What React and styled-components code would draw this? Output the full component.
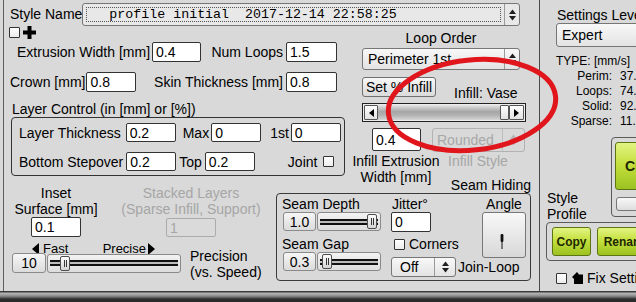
import React from 'react';
import styled, { createGlobalStyle } from 'styled-components';

const GlobalStyle = createGlobalStyle`
  html, body { margin: 0; padding: 0; }
  body {
    background: #d9d9d9;
    font-family: 'Liberation Sans', Arial, sans-serif;
    font-size: 14px;
    color: #000;
  }
`;

const Screen = styled.div`
  position: relative;
  width: 636px;
  height: 302px;
  overflow: hidden;
  background: #d9d9d9;
`;

const Main = styled.div`
  display: flex;
  height: 291px;
`;

const LeftPanel = styled.div`
  margin-left: 3px;
  width: 537px;
  flex-shrink: 0;
  box-sizing: border-box;
  border-left: 1px solid #5e5e5e;
  border-right: 1px solid #4a4a4a;
`;

const PanelGrid = styled.div`
  display: grid;
  grid-template-columns: 272px 74px 1fr;
  grid-template-rows: 26px 150px 17px 88px;
  grid-template-areas:
    'name name name'
    'upper upper right'
    'lower . right'
    'lower seam seam';
`;

/* generic controls */

const Label = styled.span`
  margin-left: ${(p) => p.$ml || 0}px;
  margin-top: ${(p) => p.$mt || 0}px;
  white-space: nowrap;
  line-height: 16px;
  color: ${(p) => (p.$muted ? '#a6a6a6' : 'inherit')};
`;

const Field = styled.div`
  width: ${(p) => p.$w}px;
  height: ${(p) => p.$h || 20}px;
  margin-left: ${(p) => p.$ml || 0}px;
  margin-top: ${(p) => p.$mt || 0}px;
  flex-shrink: 0;
  box-sizing: border-box;
  border: 1px solid ${(p) => (p.$disabled ? '#ababab' : '#333')};
  border-radius: 2px;
  background: ${(p) => (p.$disabled ? '#dadada' : '#fff')};
  color: ${(p) => (p.$disabled ? '#a6a6a6' : '#000')};
  padding-left: 3px;
  display: flex;
  align-items: center;
  text-align: left;
`;

const Checkbox = styled.div`
  width: 11px;
  height: 11px;
  margin-left: ${(p) => p.$ml || 0}px;
  margin-top: ${(p) => p.$mt || 0}px;
  flex-shrink: 0;
  box-sizing: border-box;
  border: 1px solid #333;
  border-radius: 1px;
  background: linear-gradient(#ffffff, #ececec);
`;

const Combo = styled.div`
  display: flex;
  width: ${(p) => p.$w}px;
  height: ${(p) => p.$h || 22}px;
  margin-left: ${(p) => p.$ml || 0}px;
  margin-top: ${(p) => p.$mt || 0}px;
  flex-shrink: 0;
  box-sizing: border-box;
  border: 1px solid ${(p) => (p.$disabled ? '#b2b2b2' : '#767676')};
  border-radius: 3px;
  background: ${(p) =>
    p.$disabled ? '#d9d9d9' : p.$flat ? '#e8e8e8' : 'linear-gradient(#f8f8f8, #e3e3e3)'};
  color: ${(p) => (p.$disabled ? '#a8a8a8' : '#000')};
`;

const ComboText = styled.div`
  flex: 1;
  min-width: 0;
  display: flex;
  align-items: center;
  padding-left: ${(p) => (p.$pl === undefined ? 5 : p.$pl)}px;
  white-space: nowrap;
  overflow: hidden;
`;

const FocusText = styled.div`
  flex: 1;
  margin: 3px;
  border: 1px dotted #555;
  display: flex;
  align-items: center;
  padding-left: 22px;
  font-family: 'Liberation Mono', 'Courier New', monospace;
  font-size: 13.3px;
  white-space: pre;
`;

const ComboButton = styled.div`
  width: ${(p) => p.$w || 15}px;
  flex-shrink: 0;
  box-sizing: border-box;
  border-left: 1px solid ${(p) => (p.$disabled ? '#bdbdbd' : '#9a9a9a')};
  display: flex;
  align-items: center;
  justify-content: center;
`;

const PushButton = styled.div`
  width: ${(p) => p.$w}px;
  height: ${(p) => p.$h}px;
  flex-shrink: 0;
  box-sizing: border-box;
  border: 1px solid #6f6f6f;
  border-radius: 3px;
  background: linear-gradient(#f8f8f8, #dadada);
  display: flex;
  align-items: center;
  justify-content: center;
  white-space: nowrap;
`;

const GreenButton = styled.div`
  width: ${(p) => p.$w}px;
  height: ${(p) => p.$h}px;
  flex-shrink: 0;
  box-sizing: border-box;
  border: 1px solid #5c7412;
  border-radius: 3px;
  background: linear-gradient(#e3f483 0%, #c4e03e 45%, #9cc221 100%);
  color: #1d2600;
  font-weight: bold;
  font-size: ${(p) => p.$fs || 12}px;
  display: flex;
  align-items: center;
  justify-content: ${(p) => (p.$pl ? 'flex-start' : 'center')};
  padding-left: ${(p) => p.$pl || 0}px;
  white-space: nowrap;
`;

const ValueBox = styled.div`
  width: ${(p) => p.$w}px;
  height: ${(p) => p.$h || 19}px;
  flex-shrink: 0;
  box-sizing: border-box;
  border: 1px solid #8a8a8a;
  border-radius: 3px;
  background: linear-gradient(#f6f6f6, #dbdbdb);
  display: flex;
  align-items: center;
  justify-content: center;
`;

const SliderBox = styled.div`
  width: ${(p) => p.$w}px;
  height: ${(p) => p.$h || 19}px;
  margin-left: ${(p) => p.$ml || 0}px;
  flex-shrink: 0;
  box-sizing: border-box;
  border: 1px solid #8a8a8a;
  border-radius: 3px;
  background: linear-gradient(#f3f3f3, #dddddd);
  padding: 0 2px;
  display: flex;
  align-items: center;
`;

const TrackPart = styled.div`
  width: ${(p) => (p.$w === undefined ? 'auto' : `${p.$w}px`)};
  flex: ${(p) => (p.$w === undefined ? 1 : 'none')};
  height: 6px;
  box-sizing: border-box;
  border-top: 2px solid #111;
  border-bottom: 2px solid #111;
  background: #bdbdbd;
`;

const Thumb = styled.div`
  width: 10px;
  height: 15px;
  flex-shrink: 0;
  box-sizing: border-box;
  border: 1px solid #4e4e4e;
  border-radius: 2px;
  background: linear-gradient(#fdfdfd, #d4d4d4);
  display: flex;
  align-items: center;
  justify-content: center;

  &::after {
    content: '';
    width: 1px;
    height: 7px;
    border-left: 1px solid #333;
    border-right: 1px solid #333;
  }
`;

const Slider = ({ w, pos, ml }) => (
  <SliderBox $w={w} $ml={ml}>
    <TrackPart $w={pos} />
    <Thumb />
    <TrackPart />
  </SliderBox>
);

const UpDown = ({ color = '#1e1e1e' }) => (
  <svg width="7" height="12" viewBox="0 0 7 12">
    <path d="M3.5 0.5 L7 5 L0 5 Z" fill={color} />
    <path d="M0 7 L7 7 L3.5 11.5 Z" fill={color} />
  </svg>
);

const Tri = ({ dir, w = 6, h = 10 }) => (
  <svg width={w} height={h} viewBox={`0 0 ${w} ${h}`}>
    <path
      d={dir === 'left' ? `M${w} 0 L${w} ${h} L0 ${h / 2} Z` : `M0 0 L${w} ${h / 2} L0 ${h} Z`}
      fill="#000"
    />
  </svg>
);

/* name row */

const NameRow = styled.div`
  grid-area: name;
  display: flex;
  align-items: flex-start;
  padding: 3px 0 0 6px;
`;

const NameLabel = styled.span`
  line-height: 23px;
  white-space: nowrap;
`;

/* upper left block */

const Upper = styled.div`
  grid-area: upper;
  display: flex;
  flex-direction: column;
`;

const CheckRow = styled.div`
  display: flex;
  align-items: flex-start;
  height: 14px;
  padding-left: 5px;
`;

const PlusIcon = styled.svg`
  margin-left: 3px;
  margin-top: 0;
`;

const FormRow = styled.div`
  display: flex;
  align-items: center;
  justify-content: space-between;
  width: 333px;
  height: 20px;
  box-sizing: border-box;
  margin-top: ${(p) => p.$mt}px;
  padding-left: ${(p) => p.$pl}px;
`;

const Pair = styled.div`
  display: flex;
  align-items: center;
`;

const GroupCaption = styled.div`
  margin-top: 9px;
  padding-left: 8px;
  line-height: 16px;
  white-space: nowrap;
`;

const LayerBox = styled.div`
  margin-left: 7px;
  width: 334px;
  height: 59px;
  box-sizing: border-box;
  border: 1px solid #333;
  border-radius: 4px;
  padding: 5px 0 0 7px;
`;

const BoxRow = styled.div`
  display: flex;
  align-items: center;
  height: 19px;
  margin-top: ${(p) => p.$mt || 0}px;
`;

/* right column of the left panel */

const RightCol = styled.div`
  grid-area: right;
  display: flex;
  flex-direction: column;
`;

const CenterCaption = styled.div`
  width: 158px;
  margin: 4px 0 0 12px;
  text-align: center;
  line-height: 16px;
`;

const ButtonRow = styled.div`
  display: flex;
  align-items: flex-start;
  height: 20px;
  margin-top: 7px;
  padding-left: 12px;
`;

const Scrollbar = styled.div`
  display: flex;
  width: 164px;
  height: 19px;
  margin: 6px 0 0 12px;
  box-sizing: border-box;
  border: 1px solid #222;
  padding: 1px;
  background: #ececec;
`;

const ScrollButton = styled.div`
  width: ${(p) => p.$w}px;
  flex-shrink: 0;
  box-sizing: border-box;
  border: 1px solid #555;
  border-radius: 1px;
  background: linear-gradient(#ffffff, #e2e2e2);
  display: flex;
  align-items: center;
  justify-content: center;
`;

const ScrollTrack = styled.div`
  flex: 1;
  background: linear-gradient(#e4e4e4 0%, #a6a6a6 45%, #b4b4b4 70%, #d6d6d6 100%);
`;

const InfillRow = styled.div`
  display: flex;
  align-items: flex-start;
  height: 24px;
  margin-top: 6px;
  padding-left: 22px;
`;

const CaptionRow = styled.div`
  display: flex;
  margin-top: 1px;
`;

const CaptionBlock = styled.div`
  width: 92px;
  text-align: center;
  line-height: 16px;
  white-space: nowrap;
`;

const CaptionSide = styled.div`
  flex: 1;
  display: flex;
  flex-direction: column;
  padding-right: 8px;
  line-height: 16px;
`;

const SeamTitle = styled.span`
  align-self: flex-end;
  margin-top: 8px;
  white-space: nowrap;
`;

/* lower left block */

const Lower = styled.div`
  grid-area: lower;
  display: flex;
  flex-direction: column;
  padding-top: 9px;
`;

const LowerTop = styled.div`
  display: flex;
`;

const StackCol = styled.div`
  width: ${(p) => p.$w}px;
  display: flex;
  flex-direction: column;
  align-items: center;
  text-align: center;
  line-height: 16px;
  white-space: nowrap;
  color: ${(p) => (p.$muted ? '#a6a6a6' : '#000')};
`;

const SpeedRow = styled.div`
  display: flex;
  margin-top: 6px;
  padding-left: 8px;
`;

const SliderCol = styled.div`
  display: flex;
  flex-direction: column;
`;

const SpeedLabels = styled.div`
  display: flex;
  justify-content: space-between;
  align-items: flex-start;
  width: 143px;
  height: 10px;
  box-sizing: border-box;
  padding-left: 20px;
  font-size: 13px;
  line-height: 12px;
`;

const SpeedLabel = styled.span`
  display: flex;
  align-items: center;
  gap: ${(p) => p.$gap}px;
  height: 12px;
`;

const SliderRow = styled.div`
  display: flex;
  align-items: center;
  height: 20px;
`;

const PrecisionLabel = styled.div`
  margin: 5px 0 0 9px;
  line-height: 16px;
  white-space: nowrap;
`;

/* seam hiding box */

const SeamBox = styled.div`
  grid-area: seam;
  margin-right: 8px;
  box-sizing: border-box;
  border: 1px solid #3a3a3a;
  border-radius: 4px;
  display: grid;
  grid-template-columns: 111px 90px 1fr;
  grid-template-rows: 18px 20px 20px 25px;
  grid-template-areas:
    'dl jl al'
    'ds ji an'
    'gl co an'
    'gs jo jo';
`;

const SeamCell = styled.div`
  grid-area: ${(p) => p.$area};
  display: flex;
  align-items: ${(p) => p.$align || 'flex-end'};
  padding-left: ${(p) => p.$pl || 0}px;
  padding-top: ${(p) => p.$pt || 0}px;
  line-height: 16px;
  white-space: nowrap;
`;

const AngleCaption = styled.div`
  width: 44px;
  margin-left: 4px;
  text-align: center;
`;

const AngleButton = styled.div`
  width: 44px;
  height: 46px;
  margin-left: 4px;
  box-sizing: border-box;
  border: 1px solid #777;
  border-radius: 3px;
  background: linear-gradient(#f8f8f8, #d8d8d8);
  display: flex;
  align-items: center;
  justify-content: center;
  padding: 12px 4px 0 0;
`;

/* right panel */

const RightPanel = styled.div`
  flex: 1;
  min-width: 0;
  display: flex;
  flex-direction: column;
`;

const SettingsCaption = styled.div`
  margin-top: 7px;
  padding-left: 17px;
  line-height: 16px;
  white-space: nowrap;
`;

const Stats = styled.div`
  display: grid;
  grid-template-columns: 72px auto;
  column-gap: 8px;
  margin-top: 7px;
  font-size: 12px;
  line-height: 15px;
  white-space: nowrap;
`;

const StatType = styled.div`
  grid-column: 1 / -1;
  padding-left: 16px;
`;

const StatName = styled.div`
  text-align: right;
`;

const ProfileRow = styled.div`
  display: flex;
  margin-top: 8px;
`;

const ProfileCaption = styled.div`
  width: 71px;
  flex-shrink: 0;
  box-sizing: border-box;
  padding-left: 7px;
  margin-top: 53px;
  line-height: 16px;
`;

const ActionFrame = styled.div`
  width: 60px;
  height: 80px;
  flex-shrink: 0;
  box-sizing: border-box;
  border: 1px solid #5a5a5a;
  border-radius: 4px;
  padding: 4px 0 0 3px;
  display: flex;
  flex-direction: column;
`;

const SmallGrey = styled.div`
  width: 70px;
  height: 14px;
  margin: 7px 0 0 1px;
  box-sizing: border-box;
  border: 1px solid #777;
  border-radius: 3px;
  background: linear-gradient(#f8f8f8, #dddddd);
`;

const CopyFrame = styled.div`
  width: 130px;
  height: 39px;
  margin-left: 6px;
  box-sizing: border-box;
  border: 1px solid #5a5a5a;
  border-radius: 4px;
  padding: 4px 0 0 5px;
  display: flex;
  gap: 6px;
`;

const FixRow = styled.div`
  display: flex;
  align-items: center;
  height: 14px;
  margin-top: 10px;
  padding-left: 16px;
  white-space: nowrap;
`;

const FixIcon = styled.svg`
  margin-left: 5px;
  flex-shrink: 0;
`;

const BottomStrip = styled.div`
  height: 11px;
  background: linear-gradient(
    #3a3a3a 0px,
    #3a3a3a 1px,
    #b8b8b8 2px,
    #8c8c8c 5px,
    #505050 7px,
    #2b2b2b 8px,
    #2b2b2b 100%
  );
`;

const Annotation = styled.svg`
  position: absolute;
  left: 0;
  top: 0;
  pointer-events: none;
`;

const App = () => {
  return (
    <Screen>
      <GlobalStyle />
      <Main>
        <LeftPanel>
          <PanelGrid>
            <NameRow>
              <NameLabel>Style Name</NameLabel>
              <Combo $w={438} $h={23} $flat>
                <FocusText>profile initial  2017-12-14 22:58:25</FocusText>
                <ComboButton>
                  <UpDown />
                </ComboButton>
              </Combo>
            </NameRow>

            <Upper>
              <CheckRow>
                <Checkbox $mt={1} />
                <PlusIcon width="13" height="13" viewBox="0 0 13 13">
                  <path d="M4.5 0h4v4.5H13v4H8.5V13h-4V8.5H0v-4h4.5z" fill="#000" />
                </PlusIcon>
              </CheckRow>
              <FormRow $mt={2} $pl={13}>
                <Pair>
                  <Label>Extrusion Width [mm]</Label>
                  <Field $w={49} $ml={2}>0.4</Field>
                </Pair>
                <Pair>
                  <Label>Num Loops</Label>
                  <Field $w={51} $ml={3}>1.5</Field>
                </Pair>
              </FormRow>
              <FormRow $mt={10} $pl={6}>
                <Pair>
                  <Label>Crown [mm]</Label>
                  <Field $w={50} $ml={1}>0.8</Field>
                </Pair>
                <Pair>
                  <Label>Skin Thickness [mm]</Label>
                  <Field $w={51} $ml={3}>0.8</Field>
                </Pair>
              </FormRow>
              <GroupCaption>Layer Control (in [mm] or [%])</GroupCaption>
              <LayerBox>
                <BoxRow>
                  <Label>Layer Thickness</Label>
                  <Field $w={50} $h={19} $ml={5}>0.2</Field>
                  <Label $ml={7}>Max</Label>
                  <Field $w={50} $h={19} $ml={2}>0</Field>
                  <Label $ml={9}>1st</Label>
                  <Field $w={50} $h={19} $ml={2}>0</Field>
                </BoxRow>
                <BoxRow $mt={10}>
                  <Label>Bottom Stepover</Label>
                  <Field $w={50} $h={19} $ml={3}>0.2</Field>
                  <Label $ml={3}>Top</Label>
                  <Field $w={50} $h={19} $ml={3}>0.2</Field>
                  <Label $ml={33}>Joint</Label>
                  <Checkbox $ml={6} />
                </BoxRow>
              </LayerBox>
            </Upper>

            <RightCol>
              <CenterCaption>Loop Order</CenterCaption>
              <Combo $w={158} $h={22} $ml={12} $mt={2}>
                <ComboText>Perimeter 1st</ComboText>
                <ComboButton>
                  <UpDown />
                </ComboButton>
              </Combo>
              <ButtonRow>
                <PushButton $w={74} $h={20}>Set % Infill</PushButton>
                <Label $ml={18} $mt={8}>
                  Infill: Vase
                </Label>
              </ButtonRow>
              <Scrollbar>
                <ScrollButton $w={14}>
                  <Tri dir="left" w={5} h={8} />
                </ScrollButton>
                <ScrollTrack />
                <ScrollButton $w={9} />
                <ScrollButton $w={15}>
                  <Tri dir="right" w={5} h={8} />
                </ScrollButton>
              </Scrollbar>
              <InfillRow>
                <Field $w={49} $h={23}>0.4</Field>
                <Combo $w={93} $h={24} $ml={11} $disabled>
                  <ComboText $pl={4}>Rounded</ComboText>
                  <ComboButton $w={22} $disabled>
                    <UpDown color="#b4b4b4" />
                  </ComboButton>
                </Combo>
              </InfillRow>
              <CaptionRow>
                <CaptionBlock>
                  Infill Extrusion
                  <br />
                  Width [mm]
                </CaptionBlock>
                <CaptionSide>
                  <Label $ml={6} $muted>
                    Infill Style
                  </Label>
                  <SeamTitle>Seam Hiding</SeamTitle>
                </CaptionSide>
              </CaptionRow>
            </RightCol>

            <Lower>
              <LowerTop>
                <StackCol $w={104}>
                  <span>Inset</span>
                  <span>Surface [mm]</span>
                  <Field $w={50}>0.1</Field>
                </StackCol>
                <StackCol $w={166} $muted>
                  <span>Stacked Layers</span>
                  <span>(Sparse Infill, Support)</span>
                  <Field $w={50} $h={19} $mt={1} $disabled>
                    1
                  </Field>
                </StackCol>
              </LowerTop>
              <SpeedRow>
                <SliderCol>
                  <SpeedLabels>
                    <SpeedLabel $gap={4}>
                      <Tri dir="left" w={7} h={12} />
                      Fast
                    </SpeedLabel>
                    <SpeedLabel $gap={2}>
                      Precise
                      <Tri dir="right" w={7} h={12} />
                    </SpeedLabel>
                  </SpeedLabels>
                  <SliderRow>
                    <ValueBox $w={34} $h={20}>10</ValueBox>
                    <Slider w={134} pos={10} ml={1} />
                  </SliderRow>
                </SliderCol>
                <PrecisionLabel>
                  Precision
                  <br />
                  (vs. Speed)
                </PrecisionLabel>
              </SpeedRow>
            </Lower>

            <SeamBox>
              <SeamCell $area="dl" $pl={5}>Seam Depth</SeamCell>
              <SeamCell $area="ds" $pl={6} $align="flex-start">
                <ValueBox $w={33}>1.0</ValueBox>
                <Slider w={64} pos={47} ml={1} />
              </SeamCell>
              <SeamCell $area="gl" $pl={5}>Seam Gap</SeamCell>
              <SeamCell $area="gs" $pl={6} $align="flex-start">
                <ValueBox $w={33}>0.3</ValueBox>
                <Slider w={64} pos={2} ml={1} />
              </SeamCell>
              <SeamCell $area="jl" $pl={4}>Jitter°</SeamCell>
              <SeamCell $area="ji" $pl={3} $align="flex-start">
                <Field $w={40}>0</Field>
              </SeamCell>
              <SeamCell $area="co" $pl={6} $pt={4} $align="center">
                <Checkbox />
                <Label $ml={4}>Corners</Label>
              </SeamCell>
              <SeamCell $area="jo" $pl={3} $pt={5} $align="flex-start">
                <Combo $w={65} $h={20}>
                  <ComboText $pl={8}>Off</ComboText>
                  <ComboButton $w={21}>
                    <UpDown />
                  </ComboButton>
                </Combo>
                <Label $ml={2} $mt={2}>
                  Join-Loop
                </Label>
              </SeamCell>
              <SeamCell $area="al">
                <AngleCaption>Angle</AngleCaption>
              </SeamCell>
              <SeamCell $area="an" $align="flex-start">
                <AngleButton>
                  <svg width="4" height="15" viewBox="0 0 4 15">
                    <rect x="0.6" y="0" width="2.8" height="8" rx="1.2" fill="#111" />
                    <rect x="1.5" y="6" width="1" height="9" fill="#111" />
                  </svg>
                </AngleButton>
              </SeamCell>
            </SeamBox>
          </PanelGrid>
        </LeftPanel>

        <RightPanel>
          <SettingsCaption>Settings Level</SettingsCaption>
          <Combo $w={110} $h={24} $ml={16}>
            <ComboText $pl={5}>Expert</ComboText>
          </Combo>
          <Stats>
            <StatType>TYPE: [mm/s]</StatType>
            <StatName>Perim:</StatName>
            <div>37.5</div>
            <StatName>Loops:</StatName>
            <div>74.9</div>
            <StatName>Solid:</StatName>
            <div>92.3</div>
            <StatName>Sparse:</StatName>
            <div>11.2</div>
          </Stats>
          <ProfileRow>
            <ProfileCaption>
              Style
              <br />
              Profile
            </ProfileCaption>
            <ActionFrame>
              <GreenButton $w={70} $h={48} $fs={14} $pl={9}>
                Create
              </GreenButton>
              <SmallGrey />
            </ActionFrame>
          </ProfileRow>
          <CopyFrame>
            <GreenButton $w={39} $h={29}>Copy</GreenButton>
            <GreenButton $w={60} $h={29}>Rename</GreenButton>
          </CopyFrame>
          <FixRow>
            <Checkbox />
            <FixIcon width="12" height="12" viewBox="0 0 12 12">
              <path d="M0 5 L5 0 L7 2.5 L11 2.5 L11 12 L2 12 L2 7 Z" fill="#000" />
            </FixIcon>
            <Label $ml={3}>Fix Settings</Label>
          </FixRow>
        </RightPanel>
      </Main>
      <BottomStrip />
      <Annotation width="636" height="302" viewBox="0 0 636 302">
        <ellipse
          cx="472"
          cy="105"
          rx="84"
          ry="45"
          transform="rotate(-6 472 105)"
          fill="none"
          stroke="#e0161c"
          strokeWidth="5"
        />
      </Annotation>
    </Screen>
  );
};

export default App;
